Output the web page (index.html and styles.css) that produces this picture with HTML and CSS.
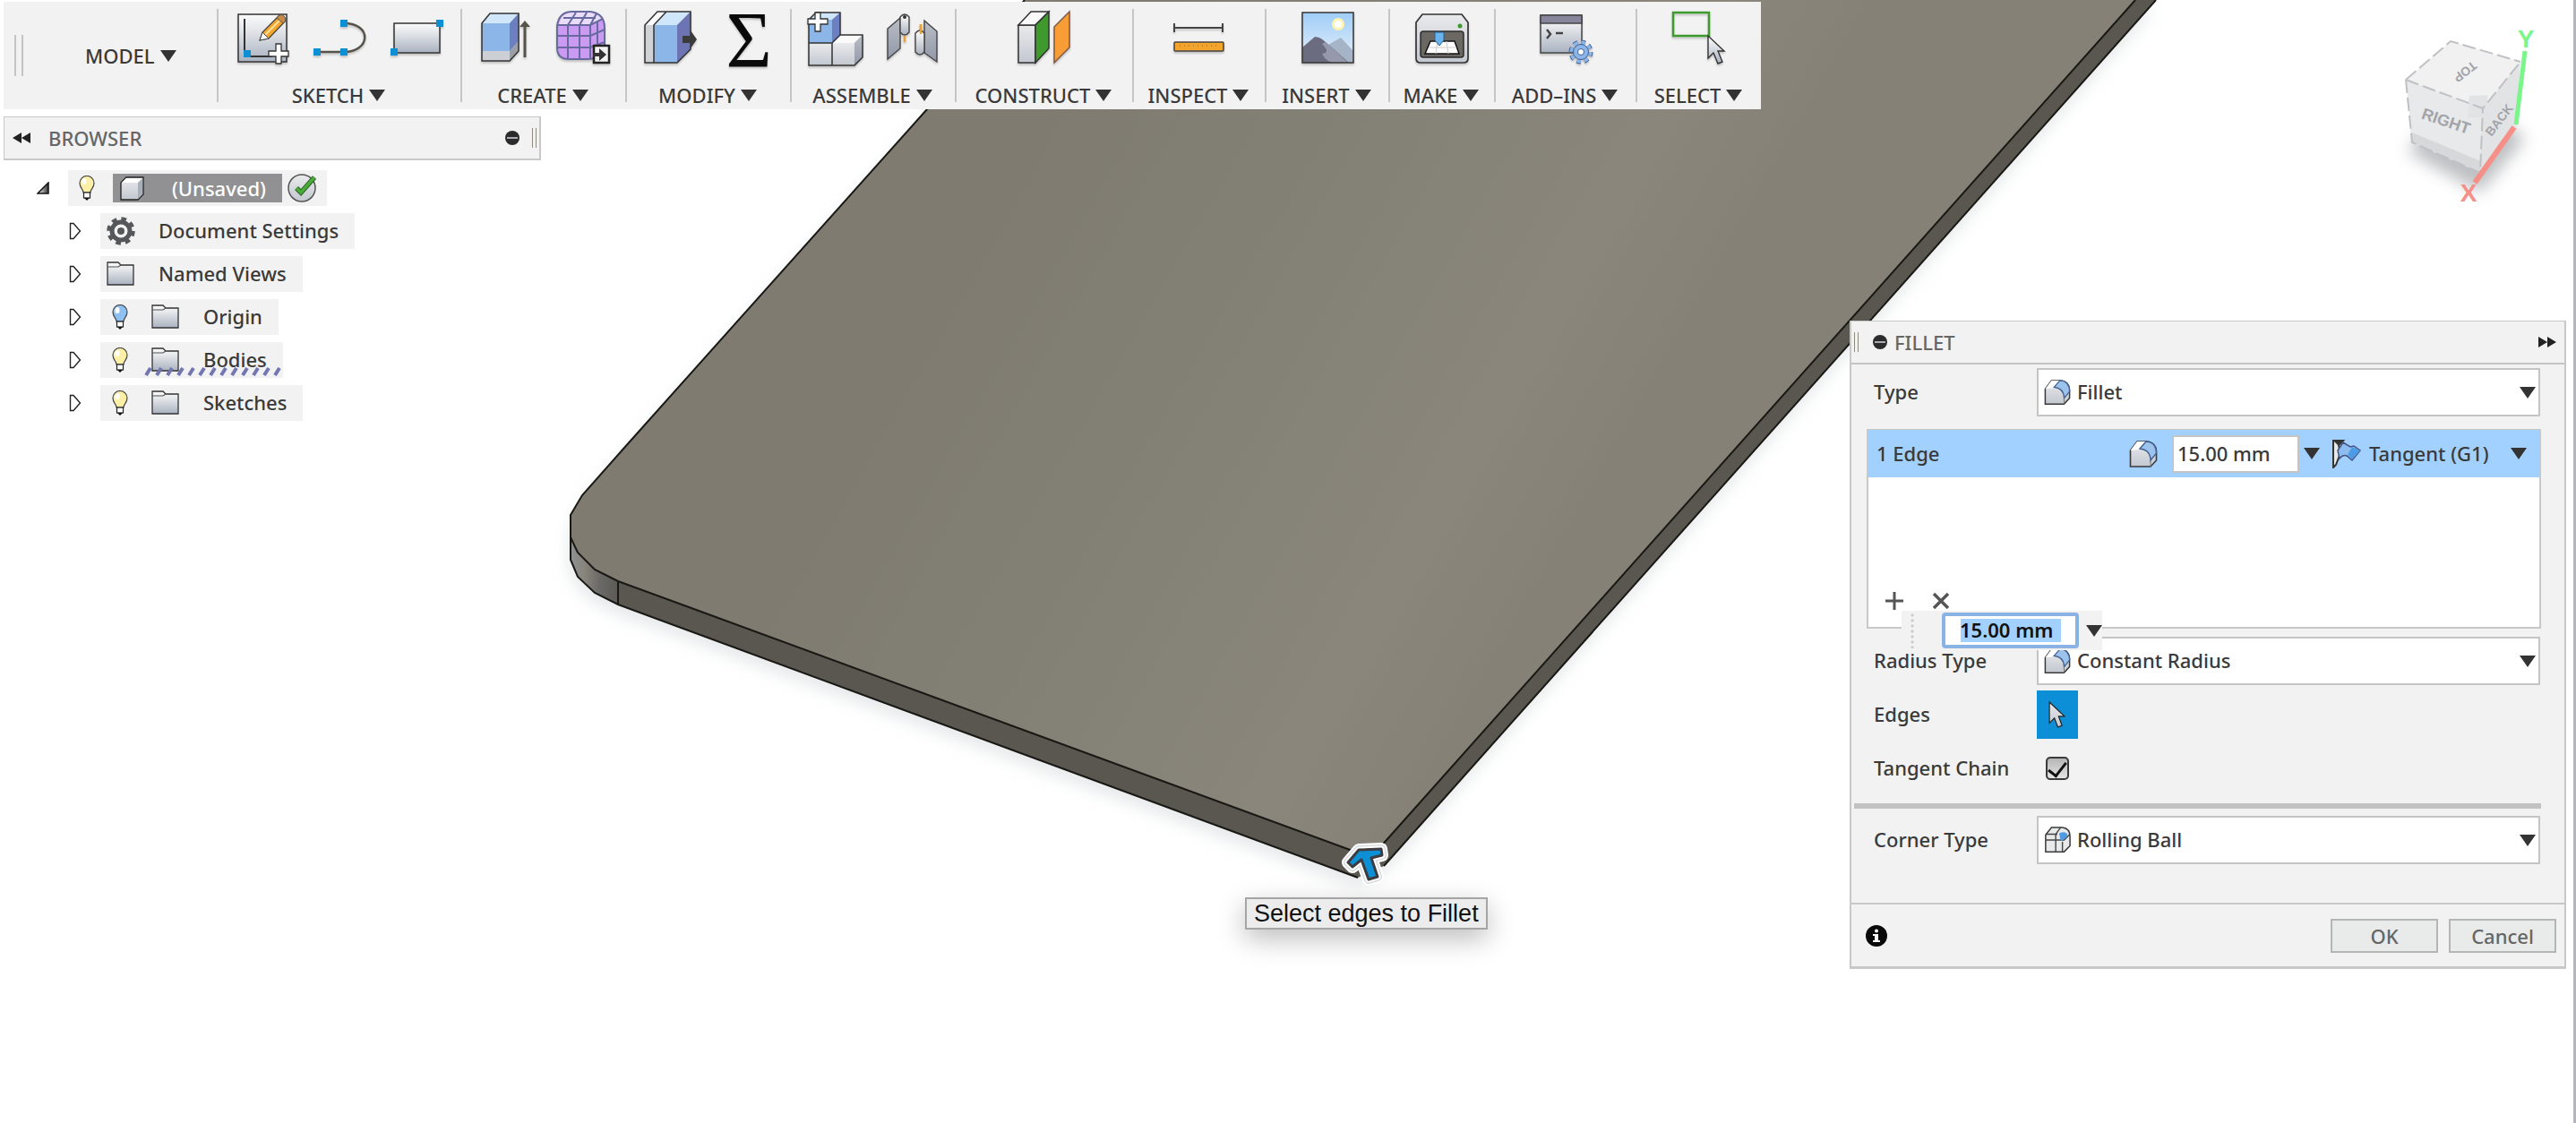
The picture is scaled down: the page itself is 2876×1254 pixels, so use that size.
FILE: index.html
```html
<!DOCTYPE html>
<html lang="en">
<head>
<meta charset="utf-8">
<title>Model workspace - Fillet</title>
<link rel="stylesheet" href="styles.css">
</head>
<body>
<svg class="defs" width="0" height="0" aria-hidden="true">
  <defs>
    <linearGradient id="g-steel" x1="0" y1="0" x2="0" y2="1"><stop offset="0" stop-color="#fbfbfc"/><stop offset=".3" stop-color="#e6e8eb"/><stop offset="1" stop-color="#a9b2c0"/></linearGradient>
    <linearGradient id="g-grey" x1="0" y1="0" x2="0" y2="1"><stop offset="0" stop-color="#e9eaec"/><stop offset="1" stop-color="#c3c8d0"/></linearGradient>
    <linearGradient id="g-side" x1="0" y1="0" x2="0" y2="1"><stop offset="0" stop-color="#b9bdc6"/><stop offset="1" stop-color="#9298a8"/></linearGradient>
    <linearGradient id="g-sky" x1="0" y1="0" x2="0" y2="1"><stop offset="0" stop-color="#9fcdf8"/><stop offset="1" stop-color="#e8f1f8"/></linearGradient>
    <linearGradient id="g-tri" x1="0" y1="0" x2="1" y2="0"><stop offset="0" stop-color="#fff"/><stop offset="1" stop-color="#333"/></linearGradient>
    <symbol id="caret" viewBox="0 0 18 13"><path d="M0 0H18L9 13Z" fill="#333"/></symbol>
    <symbol id="bulb" viewBox="0 0 18 28"><path d="M5 19C5 15 1 14 1 8.500A8 8 0 0 1 17 8.500C17 14 13 15 13 19Z" fill="currentColor" stroke="#444" stroke-width="1.200"/><ellipse cx="6" cy="6.500" rx="2.500" ry="3.500" fill="#fff"/><rect x="5.500" y="19" width="7" height="6" fill="#fff" stroke="#222" stroke-width="1.200"/><path d="M6 25h6l-3 3z" fill="#111"/></symbol>
    <symbol id="folder" viewBox="0 0 32 28"><path d="M1 26V1H13L16 4H30V26Z" fill="url(#g-steel)" stroke="#333" stroke-width="1.300"/><path d="M1 6H13L16 4" fill="none" stroke="#555" stroke-width="1.200"/></symbol>
    <symbol id="closed" viewBox="0 0 14 20"><path d="M1.500 1.500H5L12.500 10L5 18.500H1.500Z" fill="#fff" stroke="#222" stroke-width="1.400"/></symbol>
    <symbol id="minus" viewBox="0 0 16 16"><circle cx="8" cy="8" r="8" fill="#2b2b2b"/><rect x="2" y="7" width="12" height="2" fill="#a9adb3"/></symbol>
    <symbol id="fillet" viewBox="0 0 32 32"><path d="M1.500 30V12L9 2H19C27 2 30.500 8 30.500 13V23L24 30Z" fill="url(#g-grey)" stroke="#3a3a3a" stroke-width="1.600"/><path d="M9 2H19L12 11L1.500 12Z" fill="#fff"/><path d="M19 2C27 2 30.500 8 30.500 15L24 23C24 16 21 11 12 10Z" fill="#9cc3ee" stroke="#44608f" stroke-width="1.400"/><path d="M24 30V23" stroke="#777"/></symbol>
    <symbol id="arrow" viewBox="0 0 20 32"><path d="M1 1V26L7 20L11 31L16 29L12 18H19Z" fill="url(#g-grey)" stroke="#222" stroke-width="1.300"/></symbol>
  </defs>
</svg>

<svg class="scene" viewBox="0 0 2876 1254" preserveAspectRatio="xMinYMin slice" aria-hidden="true">
  <defs>
    <linearGradient id="m-top" gradientUnits="userSpaceOnUse" x1="1100" y1="250" x2="1750" y2="620"><stop offset="0" stop-color="#7f7b70"/><stop offset=".4" stop-color="#838075"/><stop offset=".8" stop-color="#8a867c"/><stop offset="1" stop-color="#858176"/></linearGradient>
    <linearGradient id="m-corner" gradientUnits="userSpaceOnUse" x1="637" y1="0" x2="690" y2="0"><stop offset="0" stop-color="#8f9095"/><stop offset=".3" stop-color="#87847b"/><stop offset=".6" stop-color="#6c6a68"/><stop offset="1" stop-color="#5c5a54"/></linearGradient>
    <filter id="m-shadow" x="-5%" y="-5%" width="110%" height="115%"><feGaussianBlur stdDeviation="9"/></filter>
  </defs>
  <path d="M637 590V625L645 644L664 662L690 675L1516 980L1545 967L2407 0H1144L650 553Z" fill="#ccd2d4" opacity=".5" transform="translate(-2 10)" filter="url(#m-shadow)"/>
  <path d="M690 649L1540 952L1516 980L690 675Z" fill="#5a5750"/>
  <path d="M1516 980L1540 944L2384 0H2407L1545 967Z" fill="#5a5750"/>
  <path d="M637 600L645 617L664 636L690 649V675L664 662L645 644L637 625Z" fill="url(#m-corner)"/>
  <path d="M1144 0H2384L1540 947Q1530 955 1505 948L690 649L664 636L645 617L637 600V575L650 553L697 500L1035 122Z" fill="url(#m-top)"/>
  <path d="M2384 0L1540 947M1510 950L690 649L664 636L645 617L637 600V575L650 553L697 500L1035 122L1144 0" fill="none" stroke="#191815" stroke-width="2"/>
  <path d="M637 600V625L645 644L664 662L690 675L1516 980M690 649V675" fill="none" stroke="#191815" stroke-width="2"/>
  <path d="M2407 0L1545 967" fill="none" stroke="#191815" stroke-width="2"/>
</svg>

<svg class="view-cube" viewBox="0 0 190 220" role="img" aria-label="View cube">
  <defs><filter id="c-shadow" x="-30%" y="-30%" width="160%" height="160%"><feGaussianBlur stdDeviation="9"/></filter></defs>
  <path d="M20 150L100 195L150 135L120 110L40 120Z" fill="#9a9da1" opacity=".65" filter="url(#c-shadow)"/>
  <path d="M17 69L103 101L100 173L24 139Z" fill="#e8e9ea"/>
  <path d="M24 128L101 160L100 173L24 139Z" fill="#d6d8da"/>
  <path d="M103 101L145 49L140 120L100 173Z" fill="#e2e3e5"/>
  <path d="M67 26L145 49L103 101L17 69Z" fill="#f1f1f1"/>
  <path d="M88 87L108 86L108 110L86 112Z" fill="#e2e3e4"/>
  <path d="M17 69L67 26L145 49M17 69L103 101L145 49M17 69L24 139L100 173L103 101" fill="none" stroke="#bfc1c5" stroke-width="2" stroke-dasharray="15 5"/>
  <text class="cube-face" transform="translate(60 121) rotate(19)" text-anchor="middle">RIGHT</text>
  <text class="cube-face cube-face-small" transform="translate(84 61) rotate(142)" text-anchor="middle" dy="6">TOP</text>
  <text class="cube-face cube-face-small" transform="translate(125 117) rotate(-52)" text-anchor="middle">BACK</text>
  <path d="M140 119L150 37" stroke="#79f58a" stroke-width="5"/>
  <path d="M138 122L94 184" stroke="#f58f88" stroke-width="6"/>
  <text class="axis axis-y" x="151" y="33" text-anchor="middle">Y</text>
  <text class="axis axis-x" x="87" y="205" text-anchor="middle">X</text>
</svg>

<header class="toolbar">
  <div class="workspace"><span class="grip"></span><button class="menu" type="button">MODEL <svg class="caret"><use href="#caret"/></svg></button></div>

  <section class="group">
    <div class="tools">
      <svg class="tool" viewBox="0 0 64 64"><rect x="4" y="5" width="54" height="53" fill="url(#g-steel)" stroke="#333" stroke-width="1.500"/><path d="M11 10V52H42" fill="none" stroke="#333" stroke-width="2"/><rect x="10" y="45" width="8" height="8" fill="#0d8fd6"/><path d="M28 34L31 25L50 6L57 12L38 32Z" fill="#f4a52c" stroke="#444" stroke-width="1.300"/><path d="M34 28L53 9" stroke="#ffe0a0" stroke-width="2"/><path d="M28 34L31 25L38 32Z" fill="#fff" stroke="#444"/><path d="M47 9L50 6Q56 4 57 12L54 15Z" fill="#c98a45" stroke="#555"/><path d="M46 38h6v8h8v6h-8v8h-6v-8h-8v-6h8z" fill="#fff" stroke="#333" stroke-width="1.300"/></svg>
      <svg class="tool" viewBox="0 0 64 64"><path d="M6 47H36C66 47 68 15 36 15" fill="none" stroke="#55534a" stroke-width="2.500"/><path d="M2 43h8v8H2zM32 43h8v8h-8zM32 11h8v8h-8z" fill="#0d8fd6"/></svg>
      <svg class="tool" viewBox="0 0 64 64"><rect x="6" y="15" width="51" height="33" fill="url(#g-steel)" stroke="#333" stroke-width="1.500"/><path d="M53 11h8v8h-8zM2 43h8v8H2z" fill="#0d8fd6"/></svg>
    </div>
    <button class="menu" type="button">SKETCH <svg class="caret"><use href="#caret"/></svg></button>
  </section>

  <section class="group">
    <div class="tools">
      <svg class="tool" viewBox="0 0 64 64"><path d="M5 15H36V57H5Z" fill="#8db6e8"/><path d="M5 46H36V57H5Z" fill="#ccd0d5"/><path d="M5 15L14 4H46L36 15Z" fill="#cfe6fb"/><path d="M36 15L46 4V35L36 46Z" fill="#6c7fc0"/><path d="M36 46L46 35V46L36 57Z" fill="#9a9ea6"/><path d="M5 15L14 4H46V46L36 57H5Z" fill="none" stroke="#333" stroke-width="1.500"/><path d="M53 53V16" stroke="#55534a" stroke-width="3"/><path d="M47 19L53 12L59 19Z" fill="#55534a"/></svg>
      <svg class="tool" viewBox="0 0 64 64"><path d="M3 18Q5 2 20 2H40Q56 4 56 20V40Q54 55 36 55H16Q3 55 3 42Z" fill="#cb9bf3"/><path d="M5 16Q8 2 20 2H40Q50 3 54 11L40 16Z" fill="#eadcfb"/><path d="M3 18Q5 2 20 2H40Q56 4 56 20V40Q54 55 36 55H16Q3 55 3 42ZM4 17H40L54 10M3 29H40L56 22M3 42H40L56 36M15 55V17L24 3M28 55V17L36 3M40 55V17L47 4M48 50V13M10 9H46" fill="none" stroke="#686a9f" stroke-width="2"/><rect x="44" y="40" width="17" height="19" fill="#f2f2f2" stroke="#222" stroke-width="2.500"/><path d="M43 48h7v-5l8 7l-8 7v-5h-7z" fill="#333"/></svg>
    </div>
    <button class="menu" type="button">CREATE <svg class="caret"><use href="#caret"/></svg></button>
  </section>

  <section class="group">
    <div class="tools">
      <svg class="tool" viewBox="0 0 64 64"><path d="M3 17H13V59H3Z" fill="#cfd2d6"/><path d="M3 17L17 2H27L13 17Z" fill="#fafafa"/><path d="M13 17H39V59H13Z" fill="#8db6e8"/><path d="M13 17L27 2H54L39 17Z" fill="#cfe6fb"/><path d="M39 17L54 2V44L39 59Z" fill="#6c74b4"/><path d="M3 17L17 2H54V44L39 59H3ZM13 59V17L27 2" fill="none" stroke="#333" stroke-width="1.500"/><path d="M45 29H54V23L61 33L54 43V37H45Z" fill="#3b3b3b"/></svg>
      <svg class="tool" viewBox="0 0 64 64"><text class="sigma" x="33" y="63" text-anchor="middle">Σ</text></svg>
    </div>
    <button class="menu" type="button">MODIFY <svg class="caret"><use href="#caret"/></svg></button>
  </section>

  <section class="group">
    <div class="tools">
      <svg class="tool" viewBox="0 0 64 64"><path d="M2 11H28V37H2Z" fill="#8db6e8"/><path d="M2 11L10 3H37L28 11Z" fill="#cfe6fb"/><path d="M28 11L37 3V28L28 37Z" fill="#6c7fc0"/><path d="M2 37H53V62H2Z" fill="url(#g-grey)"/><path d="M28 37L37 28H62L53 37Z" fill="#fafafa"/><path d="M53 37L62 28V53L53 62Z" fill="url(#g-side)"/><path d="M2 62V11L10 3H37V28H62V53L53 62ZM2 37H28V62M28 37L37 28" fill="none" stroke="#333" stroke-width="1.500"/><path d="M9 3h6v7h8v6h-8v8H9v-8H1v-6h8z" fill="#fff" stroke="#333" stroke-width="1.300"/></svg>
      <svg class="tool" viewBox="0 0 64 64"><path d="M4 21L18 9V43L4 55Z" fill="url(#g-side)" stroke="#444" stroke-width="1.400"/><path d="M18 8Q23 2 28 8V25Q23 31 18 25Z" fill="url(#g-steel)" stroke="#444" stroke-width="1.400"/><circle cx="23" cy="8" r="2" fill="#333"/><path d="M23 29V36M41 16V27" stroke="#f0a030" stroke-width="2.500"/><path d="M45 12L59 24V58L45 48Z" fill="url(#g-side)" stroke="#444" stroke-width="1.400"/><path d="M35 26Q40 20 45 26V47Q40 53 35 47Z" fill="url(#g-steel)" stroke="#444" stroke-width="1.400"/><path d="M41 16V27" stroke="#f0a030" stroke-width="2.500"/></svg>
    </div>
    <button class="menu" type="button">ASSEMBLE <svg class="caret"><use href="#caret"/></svg></button>
  </section>

  <section class="group">
    <div class="tools">
      <svg class="tool" viewBox="0 0 64 64"><path d="M2 17H21V59H2Z" fill="url(#g-grey)" stroke="#333" stroke-width="1.500"/><path d="M2 17L16 2H36L21 17Z" fill="#fafafa" stroke="#333" stroke-width="1.500"/><path d="M21 17L36 2V43L21 59Z" fill="#3f9a2d" stroke="#333" stroke-width="1.500"/><path d="M42 19L59 2V42L42 59Z" fill="#f79c36" stroke="#7a5a4a" stroke-width="1.500"/></svg>
    </div>
    <button class="menu" type="button">CONSTRUCT <svg class="caret"><use href="#caret"/></svg></button>
  </section>

  <section class="group">
    <div class="tools">
      <svg class="tool" viewBox="0 0 64 64"><path d="M3 15V25M57 15V25M3 20H57" stroke="#444" stroke-width="2"/><rect x="3" y="36" width="55" height="10" rx="1" fill="#f3a42d" stroke="#444" stroke-width="1.500"/><path d="M9 40H54" stroke="#8a6a2a" stroke-dasharray="1 4"/></svg>
    </div>
    <button class="menu" type="button">INSPECT <svg class="caret"><use href="#caret"/></svg></button>
  </section>

  <section class="group">
    <div class="tools">
      <svg class="tool" viewBox="0 0 64 64"><rect x="3" y="3" width="57" height="56" fill="url(#g-sky)"/><circle cx="43" cy="16" r="7" fill="#fff3b0"/><circle cx="43" cy="16" r="4" fill="#fff"/><path d="M30 40L46 31L60 46V59H36Z" fill="#a6b4c8"/><path d="M3 42L17 30Q23 30 29 36L55 59H3Z" fill="#6c6c80"/><path d="M25 38Q35 48 25 49Q29 57 37 59H54L29 36Z" fill="#9698ac"/><rect x="3" y="3" width="57" height="56" fill="none" stroke="#333" stroke-width="1.500"/></svg>
    </div>
    <button class="menu" type="button">INSERT <svg class="caret"><use href="#caret"/></svg></button>
  </section>

  <section class="group">
    <div class="tools">
      <svg class="tool" viewBox="0 0 64 64"><path d="M2 14L9 5H53L60 14V54Q60 59 55 59H7Q2 59 2 54Z" fill="url(#g-grey)" stroke="#333" stroke-width="1.700"/><circle cx="51" cy="18" r="2.500" fill="#3f9a2d"/><rect x="7" y="24" width="48" height="29" rx="3" fill="#6b6863" stroke="#2b2b2b" stroke-width="1.500"/><path d="M18 35H45L50 49H12Z" fill="#fff" stroke="#111" stroke-width="1.500"/><path d="M16 42H47M26 35L24 49M36 35L38 49" stroke="#ccc"/><path d="M23 25H33V34L28 40L23 34Z" fill="#6bb3ec" stroke="#2a5f94"/></svg>
    </div>
    <button class="menu" type="button">MAKE <svg class="caret"><use href="#caret"/></svg></button>
  </section>

  <section class="group">
    <div class="tools">
      <svg class="tool" viewBox="0 0 64 64"><rect x="3" y="6" width="46" height="42" fill="url(#g-steel)" stroke="#444" stroke-width="1.500"/><rect x="3" y="6" width="46" height="9" fill="#86859b" stroke="#444" stroke-width="1.500"/><path d="M10 22L14 27L10 32M20 26H28" fill="none" stroke="#444" stroke-width="2.500"/><circle cx="48" cy="47" r="11" fill="none" stroke="#3f5f92" stroke-width="5" stroke-dasharray="4.640 4"/><circle cx="48" cy="47" r="10.500" fill="none" stroke="#8db6e8" stroke-width="4" stroke-dasharray="4.250 4"/><circle cx="48" cy="47" r="8.500" fill="#8db6e8" stroke="#3f5f92"/><circle cx="48" cy="47" r="3.500" fill="#fff" stroke="#3f5f92"/></svg>
    </div>
    <button class="menu" type="button">ADD–INS <svg class="caret"><use href="#caret"/></svg></button>
  </section>

  <section class="group">
    <div class="tools">
      <svg class="tool" viewBox="0 0 64 64"><rect x="2" y="3" width="40" height="26" fill="none" stroke="#3f9a2d" stroke-width="2.500"/><path d="M41 29V54L47 48L52 60L57 58L52 46H59Z" fill="url(#g-steel)" stroke="#333" stroke-width="1.400"/></svg>
    </div>
    <button class="menu" type="button">SELECT <svg class="caret"><use href="#caret"/></svg></button>
  </section>
</header>

<main class="work">
  <aside class="browser">
    <div class="browser-head">
      <svg class="chevrons" viewBox="0 0 20 12"><path d="M10 0V12L0 6ZM20 0V12L10 6Z" fill="#222"/></svg>
      <h2 class="panel-title">BROWSER</h2>
      <svg class="minus"><use href="#minus"/></svg><span class="head-grip"></span>
    </div>
    <ul class="tree">
      <li class="node root">
        <svg class="twist-open" viewBox="0 0 14 14"><path d="M1 13L13 1V13Z" fill="url(#g-tri)" stroke="#111" stroke-width="1.500"/></svg>
        <div class="node-box">
          <svg class="bulb"><use href="#bulb"/></svg>
          <span class="selected"><svg class="cube" viewBox="0 0 27 27"><path d="M1 7L7 1H26V20L20 26H1Z" fill="url(#g-grey)" stroke="#222" stroke-width="1.300"/><path d="M2 7L7 2H25L20 7Z" fill="#fff"/><path d="M20 7L25 2V20L20 25Z" fill="#a9afb8"/></svg>(Unsaved)</span>
          <svg class="check" viewBox="0 0 32 32"><circle cx="16" cy="16" r="15" fill="url(#g-grey)" stroke="#555" stroke-width="1.500"/><path d="M10 16L15 21L30 4" fill="none" stroke="#275f20" stroke-width="5.500"/><path d="M10 16L15 21L30 4" fill="none" stroke="#4aac38" stroke-width="3.500"/></svg>
        </div>
      </li>
      <li class="node"><svg class="twist"><use href="#closed"/></svg><div class="node-box">
        <svg class="gear" viewBox="0 0 32 32"><circle cx="16" cy="16" r="10" fill="none" stroke="#55575a" stroke-width="5"/><circle cx="16" cy="16" r="13.500" fill="none" stroke="#55575a" stroke-width="4.500" stroke-dasharray="5.600 5"/><circle cx="16" cy="16" r="4" fill="#55575a"/></svg><span class="label">Document Settings</span></div></li>
      <li class="node"><svg class="twist"><use href="#closed"/></svg><div class="node-box">
        <svg class="folder"><use href="#folder"/></svg><span class="label">Named Views</span></div></li>
      <li class="node"><svg class="twist"><use href="#closed"/></svg><div class="node-box">
        <svg class="bulb off"><use href="#bulb"/></svg><svg class="folder"><use href="#folder"/></svg><span class="label">Origin</span></div></li>
      <li class="node"><svg class="twist"><use href="#closed"/></svg><div class="node-box">
        <svg class="bulb"><use href="#bulb"/></svg><svg class="folder"><use href="#folder"/></svg><span class="label">Bodies</span>
        <svg class="hatch" viewBox="0 0 156 10"><path d="M2 9L7 1M14 9L19 1M26 9L31 1M38 9L43 1M50 9L55 1M62 9L67 1M74 9L79 1M86 9L91 1M98 9L103 1M110 9L115 1M122 9L127 1M134 9L139 1M146 9L151 1" stroke="#7377b0" stroke-width="4"/></svg></div></li>
      <li class="node"><svg class="twist"><use href="#closed"/></svg><div class="node-box">
        <svg class="bulb"><use href="#bulb"/></svg><svg class="folder"><use href="#folder"/></svg><span class="label">Sketches</span></div></li>
    </ul>
  </aside>

  <form class="fillet">
    <div class="fillet-head">
      <span class="head-grip"></span><svg class="minus"><use href="#minus"/></svg>
      <h2 class="panel-title">FILLET</h2>
      <svg class="chevrons" viewBox="0 0 20 12"><path d="M0 0V12L10 6ZM10 0V12L20 6Z" fill="#222"/></svg>
    </div>
    <div class="fillet-body">
      <div class="row">
        <label for="type">Type</label>
        <div class="combo"><svg class="ico"><use href="#fillet"/></svg><select id="type"><option>Fillet</option></select><svg class="caret"><use href="#caret"/></svg></div>
      </div>
      <div class="edge-list">
        <div class="edge">
          <span class="edge-name">1 Edge</span>
          <svg class="ico-lg"><use href="#fillet"/></svg>
          <input class="radius" type="text" value="15.00 mm" aria-label="Radius">
          <svg class="caret"><use href="#caret"/></svg>
          <svg class="ico-lg" viewBox="0 0 32 32"><path d="M1 1H12L7 6L9 15L4 28L1 31Z" fill="#e6e8ea" stroke="#333" stroke-width="2"/><path d="M1 1H13L6 6Z" fill="#333"/><path d="M6 12L12 3L20 8L24 7L31 12L22 23L16 18Q12 16 8 21Z" fill="#8dbcf0" stroke="#44527e" stroke-width="1.500"/><path d="M22 8L31 12L22 22L17 17Z" fill="#4d9be6"/></svg>
          <select class="continuity" aria-label="Continuity"><option>Tangent (G1)</option></select>
          <svg class="caret"><use href="#caret"/></svg>
        </div>
        <div class="list-actions">
          <button type="button" class="plain" aria-label="Add"><svg viewBox="0 0 20 20"><path d="M10 0V20M0 10H20" stroke="#555" stroke-width="3"/></svg></button>
          <button type="button" class="plain" aria-label="Remove"><svg viewBox="0 0 20 20"><path d="M2 2L18 18M18 2L2 18" stroke="#555" stroke-width="3.500"/></svg></button>
        </div>
      </div>
      <div class="row">
        <label for="radius-type">Radius Type</label>
        <div class="combo"><svg class="ico"><use href="#fillet"/></svg><select id="radius-type"><option>Constant Radius</option></select><svg class="caret"><use href="#caret"/></svg></div>
      </div>
      <div class="row">
        <label for="edges">Edges</label>
        <button id="edges" class="pick" type="button" aria-label="Select edges"><svg viewBox="0 0 20 32"><use href="#arrow"/></svg></button>
      </div>
      <div class="row">
        <label for="chain">Tangent Chain</label>
        <input id="chain" class="tick" type="checkbox" checked>
      </div>
      <hr class="rule">
      <div class="row">
        <label for="corner">Corner Type</label>
        <div class="combo"><svg class="ico" viewBox="0 0 32 32"><path d="M2 30V10L9 1H22Q31 2 31 12V23L24 30Z" fill="#e7e9eb" stroke="#3a3a3a" stroke-width="1.600"/><path d="M2 9H16M22 18V30M14 30V9L20 1M2 16H24L31 9" fill="none" stroke="#444" stroke-width="1.500"/><path d="M18 8Q25 5 28 9Q28 14 20 17Z" fill="#4d9be6"/></svg><select id="corner"><option>Rolling Ball</option></select><svg class="caret"><use href="#caret"/></svg></div>
      </div>
    </div>
    <div class="fillet-foot">
      <svg class="info" viewBox="0 0 24 24"><circle cx="12" cy="12" r="12" fill="#0a0a0a"/><path d="M8 10H14V17H16V19H8V17H10V12H8Z" fill="#fff"/><circle cx="12" cy="6.500" r="2" fill="#fff"/></svg>
      <button class="action" type="button">OK</button>
      <button class="action" type="button">Cancel</button>
    </div>
    <div class="float-input">
      <span class="dots"></span>
      <input type="text" value="15.00 mm" aria-label="Fillet radius">
      <svg class="caret"><use href="#caret"/></svg>
    </div>
  </form>
</main>

<div class="hint">
  <svg class="pointer" viewBox="0 0 56 50"><g stroke-linejoin="round"><path d="M22 13L47 12L48 19L36 22L43 43L33 46L25 24L15 32L10 27Z" fill="#fff" stroke="#fff" stroke-width="14"/><path d="M22 13L47 12L48 19L36 22L43 43L33 46L25 24L15 32L10 27Z" fill="none" stroke="#c9cbcd" stroke-width="10" opacity=".7"/><path d="M22 13L47 12L48 19L36 22L43 43L33 46L25 24L15 32L10 27Z" fill="#0d8fd6" stroke="#fff" stroke-width="7"/><path d="M22 13L47 12L48 19L36 22L43 43L33 46L25 24L15 32L10 27Z" fill="#0d8fd6" stroke="#3c3c40" stroke-width="3"/></g></svg>
  <p class="tooltip" role="tooltip">Select edges to Fillet</p>
</div>
</body>
</html>
```
FILE: styles.css
```css
* { box-sizing: border-box; }
body {
  position: relative;
  margin: 0;
  min-height: 100vh;
  overflow: hidden;
  padding: 2px 0 0 4px;
  background: #fff;
  border-right: 3px solid #b4b5ba;
  color: #3a3a3a;
  font: 500 22px/24px "Noto Sans", "Open Sans", sans-serif;
}
svg { display: block; flex: none; }
button, input, select { font: inherit; color: inherit; margin: 0; }
h2, p, ul { margin: 0; padding: 0; }
.defs { position: absolute; }
.scene { position: absolute; inset: 0; width: 100%; height: 100%; z-index: -1; }
.caret { display: inline-block; width: 18px; height: 13px; }

/* View cube */
.view-cube { position: absolute; top: 20px; right: 14px; width: 190px; height: 220px; }
.cube-face { font: 700 18px/20px "Liberation Sans", sans-serif; fill: #a2a4a9; }
.cube-face-small { font-size: 14px; }
.axis { font: 700 28px/30px "Liberation Sans", sans-serif; }
.axis-y { fill: #79f58a; }
.axis-x { fill: #f58f88; }

/* Toolbar */
.toolbar {
  display: grid;
  grid-template-columns: 238px 272px 184px 184px 184px 198px 148px 138px 118px 158px 140px;
  width: max-content;
  height: 120px;
  background: #f2f2f2;
  position: relative;
}
.menu {
  display: inline-flex;
  align-items: center;
  gap: 6px;
  padding: 0;
  border: 0;
  background: none;
  white-space: nowrap;
}
.workspace { display: flex; align-items: center; padding-left: 12px; gap: 69px; }
.grip { width: 10px; height: 46px; border: solid #c4c4c4; border-width: 0 2px; }
.group {
  display: flex;
  flex-direction: column;
  align-items: center;
  justify-content: space-between;
  padding: 9px 0 4px;
  background: linear-gradient(#c6c6c6, #c6c6c6) left center / 2px 104px no-repeat;
}
.tools { display: flex; gap: 22px; padding-left: 4px; }
.tool { width: 64px; height: 64px; overflow: visible; filter: drop-shadow(0 2px 1px #0003); }
.sigma { font: 88px/88px "Liberation Serif", serif; fill: #0a0a0a; }

/* Work area */
.work { display: flex; justify-content: space-between; align-items: flex-start; }
.panel-title { font: inherit; color: #666; }
.minus { width: 16px; height: 16px; }
.chevrons { width: 20px; height: 12px; }
.head-grip { width: 5px; height: 22px; border: solid #8f8b80; border-width: 0 1px; }

.browser { width: 600px; padding-top: 8px; }
.browser-head {
  display: flex;
  align-items: center;
  height: 49px;
  padding: 0 3px 0 9px;
  background: #f2f2f2;
  border: 1px solid #c8c8c8;
  border-width: 1px 2px 2px 1px;
}
.browser-head .panel-title { margin: 0 auto 0 20px; }
.browser-head .head-grip { margin-left: 14px; }

.tree { display: flex; flex-direction: column; gap: 8px; padding: 11px 0 0 73px; list-style: none; }
.node { display: flex; align-items: center; gap: 21px; }
.node-box { position: relative; display: flex; align-items: center; height: 40px; padding: 0 18px 0 7px; background: #f2f2f2; }
.twist { width: 14px; height: 20px; }
.twist-open { width: 14px; height: 14px; }
.root { margin-left: -36px; }
.root .node-box { padding: 0 12px; }
.bulb { width: 18px; height: 28px; color: #fdf0a6; }
.off { color: #8fc0f2; }
.node-box .bulb + .folder { margin-left: 26px; }
.node:not(.root) .bulb { margin-left: 6px; }
.folder { width: 32px; height: 28px; }
.gear { width: 32px; height: 32px; }
.label { margin-left: 26px; padding-bottom: 2px; }
.selected { display: flex; align-items: center; gap: 31px; height: 32px; margin: 0 6px 0 20px; padding: 0 18px 0 8px; background: #919193; color: #fff; }
.cube { width: 27px; height: 27px; }
.check { width: 32px; height: 32px; }
.hatch { position: absolute; left: 49px; bottom: 2px; width: 156px; height: 10px; }

/* Fillet dialog */
.fillet { position: relative; width: 800px; margin: 236px 8px 0 0; border: solid #c8c8c8; border-width: 1px 2px 3px; background: #f2f2f2; }
.fillet-head { display: flex; align-items: center; height: 48px; padding: 0 9px 0 3px; border-bottom: 2px solid #c4c4c4; }
.fillet-head .minus { margin: 0 8px 0 16px; }
.fillet-head .panel-title { margin-right: auto; }
.fillet-body { display: flex; flex-direction: column; gap: 6px; padding: 4px 26px 43px 17px; }
.row { display: grid; grid-template-columns: 182px 562px; align-items: center; height: 54px; padding-left: 8px; }
.row > label { margin-right: auto; padding-bottom: 2px; }
.combo { display: flex; align-items: center; gap: 7px; height: 54px; padding: 0 3px 0 6px; background: #fff; border: 2px solid #c4c4c4; }
.combo select, .continuity { appearance: none; flex: 1; height: 36px; border: 0; padding: 0 0 2px; background: none; line-height: 34px; }
.ico { width: 30px; height: 30px; }
.ico-lg { width: 32px; height: 32px; }
.edge-list { display: flex; flex-direction: column; justify-content: space-between; height: 223px; margin: 8px 0 3px; background: #fff; border: 2px solid #c8c8c8; border-top-width: 1px; }
.edge { display: flex; align-items: center; height: 53px; padding: 0 14px 0 9px; background: #a3d1ff; }
.edge-name { margin-right: auto; padding-bottom: 2px; }
.radius { width: 142px; height: 42px; margin: 0 5px 0 16px; padding: 0 4px 2px; border: 2px solid #c4c4c4; background: #fff; }
.edge .continuity { flex: none; width: 158px; margin-left: 9px; }
.edge .caret + .ico-lg { margin-left: 14px; }
.list-actions { display: flex; gap: 32px; padding: 0 0 19px 19px; }
.plain { width: 20px; height: 20px; padding: 0; border: 0; background: none; }
.pick { width: 46px; height: 54px; padding: 11px 13px; border: 0; background: #0d8fd8; }
.pick svg { width: 19px; height: 30px; }
.tick { appearance: none; display: grid; place-items: center; width: 26px; height: 26px; margin-left: 10px; border: 2px solid #3a3a3a; border-radius: 5px; background: linear-gradient(#b5b5b5, #e4e4e4); }
.tick:checked::after { content: ""; width: 9px; height: 17px; margin-bottom: 4px; border: solid #111; border-width: 0 3px 3px 0; transform: rotate(38deg); }
.rule { height: 6px; margin: 6px 0 2px -14px; border: 0; background: #c2c2c2; align-self: stretch; }
.fillet-foot { display: flex; align-items: center; gap: 12px; height: 71px; padding: 0 9px 0 16px; border-top: 2px solid #c8c8c8; }
.info { width: 24px; height: 24px; margin-right: auto; }
.action { width: 120px; height: 38px; padding: 0; border: 2px solid #b4b6b6; background: #e9ebeb; color: #666; }

.float-input { position: absolute; left: 56px; top: 323px; display: flex; align-items: center; width: 224px; height: 44px; padding-left: 9px; background: #f2f2f2; }
.dots { width: 6px; height: 40px; background: radial-gradient(circle, #c8c8c8 1px, transparent 2px) 0 0 / 6px 6px; }
.float-input input { width: 153px; height: 40px; margin: 0 8px 0 31px; padding: 0 16px 2px; border: 4px solid #8bb2e4; border-radius: 4px; background: linear-gradient(#a3d1ff, #a3d1ff) center / 112px 26px no-repeat #fff; color: #111; font-weight: 600; }

/* Cursor and tooltip over the model */
.hint { position: absolute; left: 1390px; top: 936px; }
.pointer { width: 56px; height: 50px; margin-left: 105px; overflow: visible; }
.tooltip { margin-top: 16px; padding: 0 8px; border: 2px solid #a6a5a6; background: #ececec; color: #111; font: 500 27px/32px "Liberation Sans", sans-serif; box-shadow: 0 10px 30px #0004; }
```
